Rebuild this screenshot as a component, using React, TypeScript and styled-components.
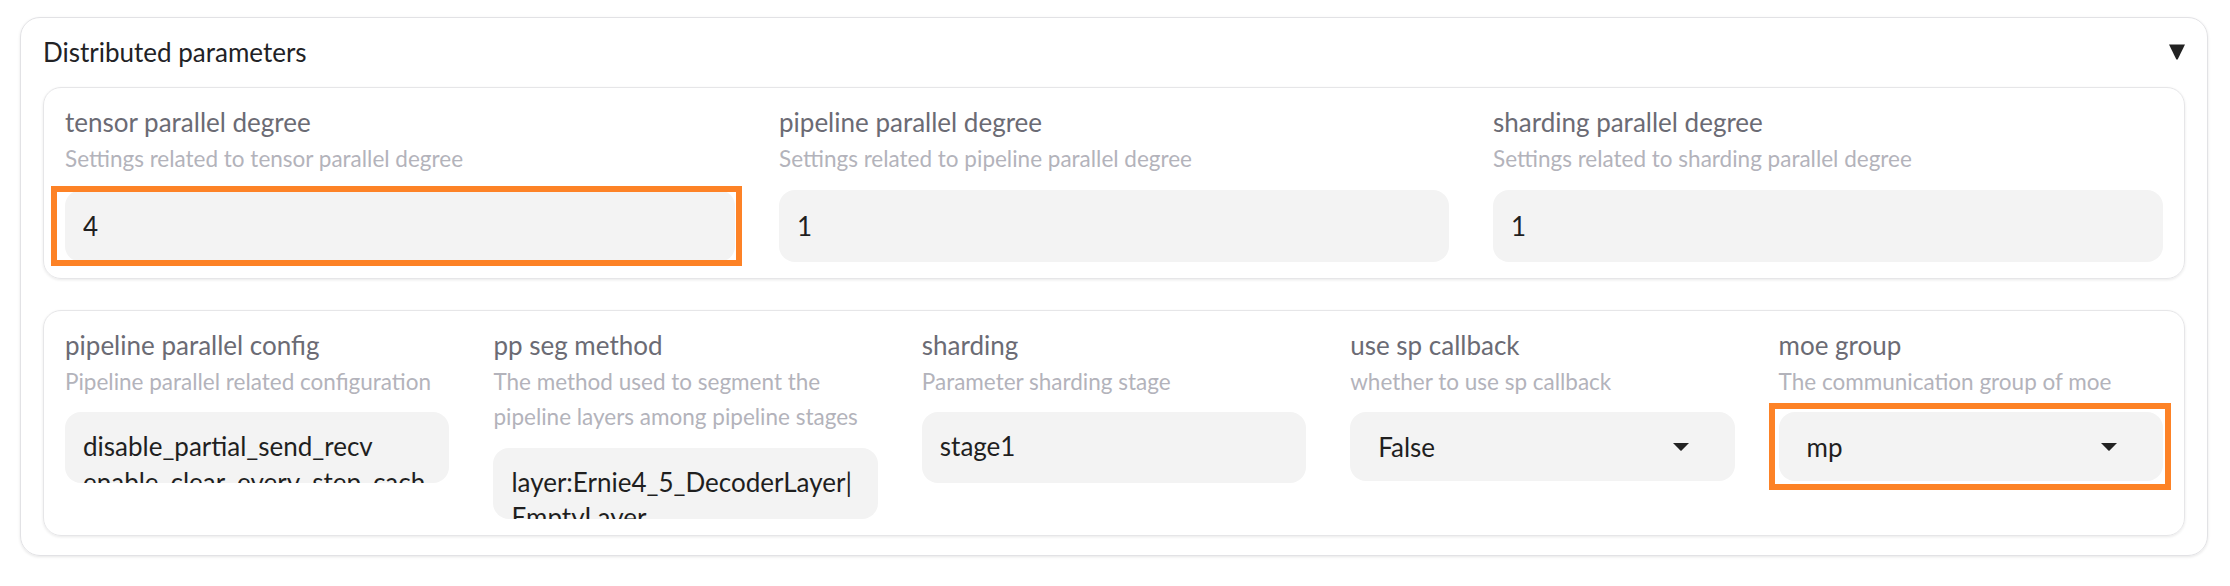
import React from "react";
import styled, { createGlobalStyle } from "styled-components";

const FONT = `Lato, "Noto Sans", "Liberation Sans", sans-serif`;

const Global = createGlobalStyle`
  html, body { margin: 0; padding: 0; background: #ffffff; }
  body { font-family: ${FONT}; -webkit-font-smoothing: antialiased; }
  * { box-sizing: border-box; }
`;

const Page = styled.div`
  width: 2230px;
  height: 586px;
  padding: 17px 22px 0 20px;
`;

const Accordion = styled.section`
  border: 1px solid #e2e2e5;
  border-radius: 20px;
  box-shadow: 0 1px 3px rgba(0, 0, 0, 0.1);
  padding: 17px 22px 19px 22px;
  display: flex;
  flex-direction: column;
  gap: 18px;
`;

const Header = styled.div`
  display: flex;
  align-items: center;
  justify-content: space-between;
  height: 34px;
`;

const Title = styled.span`
  font-size: 26px;
  line-height: 34px;
  color: #222225;
`;

const Body = styled.div`
  display: flex;
  flex-direction: column;
  gap: 31px;
`;

const Group = styled.div<{ $cols: number }>`
  border: 1px solid #e6e6e8;
  border-radius: 18px;
  box-shadow: 0 1px 3px rgba(0, 0, 0, 0.09);
  padding: 15px 21px 16px 21px;
  display: grid;
  grid-template-columns: repeat(${(p) => p.$cols}, minmax(0, 1fr));
  column-gap: 44px;
  align-items: start;
`;

const Field = styled.div`
  display: flex;
  flex-direction: column;
  min-width: 0;
`;

const Label = styled.span`
  font-size: 26px;
  line-height: 38px;
  color: #6b6b74;
`;

const Info = styled.span`
  font-size: 22.5px;
  line-height: 35.5px;
  color: #b3b3bb;
  margin-bottom: 13px;
`;

const Control = styled.div`
  position: relative;
`;

const TextInput = styled.input`
  display: block;
  width: 100%;
  height: 72px;
  border: none;
  outline: none;
  border-radius: 16px;
  background: #f3f3f3;
  padding: 0 18px;
  font-family: ${FONT};
  font-size: 26px;
  color: #1f1f1f;
`;

const TextArea = styled.textarea`
  display: block;
  width: 100%;
  height: 71px;
  border: none;
  outline: none;
  resize: none;
  overflow: hidden;
  border-radius: 16px;
  background: #f3f3f3;
  padding: 17.2px 18px 0 18px;
  font-family: ${FONT};
  font-size: 26px;
  line-height: 35.5px;
  color: #1f1f1f;
`;

const Select = styled.div`
  display: flex;
  align-items: center;
  justify-content: space-between;
  height: 69px;
  border-radius: 16px;
  background: #f3f3f3;
  padding: 0 46px 0 28px;
  font-size: 26px;
  color: #1f1f1f;
`;

const Highlight = styled.span<{ $t: number; $r: number; $b: number; $l: number }>`
  position: absolute;
  top: ${(p) => -p.$t}px;
  right: ${(p) => -p.$r}px;
  bottom: ${(p) => -p.$b}px;
  left: ${(p) => -p.$l}px;
  border: 6.7px solid #fd8226;
  pointer-events: none;
`;

const Caret = () => (
  <svg width="16" height="8" viewBox="0 0 16 8">
    <path d="M0 0 H16 L8.6 7.6 Q8 8.1 7.4 7.6 Z" fill="#222" />
  </svg>
);

const Toggle = () => (
  <svg width="16" height="16" viewBox="0 0 16 16">
    <path d="M0 0.5 H16 L8.9 15 Q8 16.4 7.1 15 Z" fill="#222" />
  </svg>
);

type Box = { t: number; r: number; b: number; l: number };

const Frame = ({ box }: { box?: Box }) =>
  box ? <Highlight $t={box.t} $r={box.r} $b={box.b} $l={box.l} /> : null;

const topFields = [
  { label: "tensor parallel degree", info: "Settings related to tensor parallel degree", value: "4", box: { t: 4, r: 6.6, b: 4.7, l: 14 } },
  { label: "pipeline parallel degree", info: "Settings related to pipeline parallel degree", value: "1" },
  { label: "sharding parallel degree", info: "Settings related to sharding parallel degree", value: "1" },
];

export default function App() {
  return (
    <>
      <Global />
      <Page>
        <Accordion>
          <Header>
            <Title>Distributed parameters</Title>
            <Toggle />
          </Header>
          <Body>
            <Group $cols={3}>
              {topFields.map((f) => (
                <Field key={f.label}>
                  <Label>{f.label}</Label>
                  <Info>{f.info}</Info>
                  <Control>
                    <TextInput readOnly value={f.value} />
                    <Frame box={f.box} />
                  </Control>
                </Field>
              ))}
            </Group>
            <Group $cols={5}>
              <Field>
                <Label>pipeline parallel config</Label>
                <Info>Pipeline parallel related configuration</Info>
                <Control>
                  <TextArea readOnly value="disable_partial_send_recv enable_clear_every_step_cache" />
                </Control>
              </Field>
              <Field>
                <Label>pp seg method</Label>
                <Info>The method used to segment the pipeline layers among pipeline stages</Info>
                <Control>
                  <TextArea readOnly value="layer:Ernie4_5_DecoderLayer|EmptyLayer" />
                </Control>
              </Field>
              <Field>
                <Label>sharding</Label>
                <Info>Parameter sharding stage</Info>
                <Control>
                  <TextArea readOnly value="stage1" />
                </Control>
              </Field>
              <Field>
                <Label>use sp callback</Label>
                <Info>whether to use sp callback</Info>
                <Control>
                  <Select>
                    <span>False</span>
                    <Caret />
                  </Select>
                </Control>
              </Field>
              <Field>
                <Label>moe group</Label>
                <Info>The communication group of moe</Info>
                <Control>
                  <Select>
                    <span>mp</span>
                    <Caret />
                  </Select>
                  <Frame box={{ t: 8.7, r: 7.6, b: 9, l: 9.5 }} />
                </Control>
              </Field>
            </Group>
          </Body>
        </Accordion>
      </Page>
    </>
  );
}
